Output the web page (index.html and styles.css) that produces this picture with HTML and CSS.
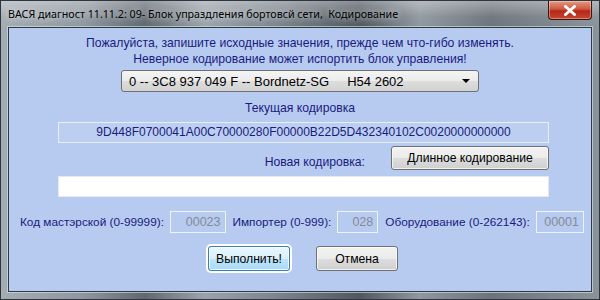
FILE: index.html
```html
<!DOCTYPE html>
<html lang="ru">
<head>
    <meta charset="UTF-8">
    <title>ВАСЯ диагност - Кодирование</title>
    <link rel="stylesheet" href="styles.css">
</head>
<body>
    <div class="window">
        <div class="titlebar">
            <span class="title">ВАСЯ диагност 11.11.2: 09- Блок упраздления бортовсй сети,&nbsp; Кодирование</span>
            <button type="button" class="close-button" aria-label="Закрыть">
                <svg width="14" height="11" viewBox="0 0 14 11">
                    <path d="M2.5 1.5 L11.5 9.5 M11.5 1.5 L2.5 9.5" stroke="#fff" stroke-width="3" stroke-linecap="round"/>
                </svg>
            </button>
        </div>

        <div class="client">
            <p class="notice">
                Пожалуйста, запишите исходные значения, прежде чем что-гибо изменять.<br>
                Неверное кодирование может испортить блок управления!
            </p>

            <div class="combo">
                <span class="combo-text">0 -- 3C8 937 049 F -- Bordnetz-SG &nbsp;&nbsp;&nbsp; H54 2602</span>
                <span class="combo-arrow"></span>
            </div>

            <div class="caption">Текущая кодировка</div>
            <div class="code-box current">9D448F0700041A00C70000280F00000B22D5D432340102C0020000000000</div>

            <div class="new-row">
                <span class="new-label">Новая кодировка:</span>
                <button type="button" class="win-button long-button">Длинное кодирование</button>
            </div>
            <div class="code-box new"></div>

            <div class="fields">
                <span class="field-label">Код мастэрской (0-99999):</span>
                <span class="field-value w-shop">00023</span>
                <span class="field-label">Импортер (0-999):</span>
                <span class="field-value w-imp">028</span>
                <span class="field-label">Оборудование (0-262143):</span>
                <span class="field-value w-equip">00001</span>
            </div>

            <div class="actions">
                <button type="button" class="win-button action default">Выполнить!</button>
                <button type="button" class="win-button action">Отмена</button>
            </div>
        </div>
    </div>
</body>
</html>
```

FILE: styles.css
```css
body {
    margin: 0;
    font-family: 'Liberation Sans', Arial, sans-serif;
    background-color: #6f7880;
}
.window {
    width: 600px;
    height: 300px;
    display: flex;
    flex-direction: column;
    box-sizing: border-box;
    border: 1px solid #2e353c;
    background: linear-gradient(90deg, #a4adb4 0%, #8e979f 14%, #5f676f 24%, #9aa3ab 34%, #7c858d 46%, #4f575f 60%, #8f989f 70%, #6b747b 82%, #8a939a 100%);
}
.titlebar {
    height: 26px;
    display: flex;
    align-items: flex-start;
    padding-left: 7px;
    background: linear-gradient(180deg, rgba(255, 255, 255, 0.35), rgba(255, 255, 255, 0.05) 60%, rgba(0, 0, 0, 0));
}
.title {
    margin-top: 6px;
    font-family: 'Noto Sans', sans-serif;
    font-size: 10.7px;
    color: #000;
    text-shadow: 0 0 6px rgba(255, 255, 255, 0.9);
    white-space: nowrap;
}
.close-button {
    margin-left: auto;
    margin-right: 7px;
    width: 44px;
    height: 19px;
    padding: 0;
    border: 1px solid #3b1510;
    border-top: none;
    border-radius: 0 0 4px 4px;
    background: linear-gradient(180deg, #e39a84 0%, #d0583f 45%, #b5281a 55%, #c8442c 100%);
    box-shadow: inset 0 0 0 1px rgba(255, 255, 255, 0.35);
    display: flex;
    align-items: center;
    justify-content: center;
}
.client {
    flex: 1;
    margin: 0 7px 7px 7px;
    border: 1px solid #2f3a44;
    box-shadow: 0 0 0 1px rgba(220, 230, 240, 0.6);
    background-color: #b7cbf0;
    display: flex;
    flex-direction: column;
    color: #1a1a80;
    font-size: 12.2px;
}
.notice {
    margin: 7px 0 0 0;
    text-align: center;
    line-height: 16px;
}
.combo {
    width: 358px;
    height: 22px;
    margin: 3px auto 0 auto;
    box-sizing: border-box;
    border: 1px solid #707070;
    border-radius: 3px;
    background: linear-gradient(180deg, #f4f4f4 0%, #ececec 50%, #dddddd 51%, #d2d2d2 100%);
    display: flex;
    align-items: center;
    padding: 0 8px 0 7px;
    color: #000;
    font-size: 13px;
}
.combo-text {
    flex: 1;
    white-space: nowrap;
}
.combo-arrow {
    width: 0;
    height: 0;
    border-left: 4px solid transparent;
    border-right: 4px solid transparent;
    border-top: 4px solid #000;
}
.caption {
    margin-top: 8px;
    text-align: center;
    line-height: 16px;
}
.code-box {
    width: 491px;
    height: 21px;
    margin-left: 49px;
    box-sizing: border-box;
    text-align: center;
    line-height: 19px;
    font-size: 12px;
    white-space: nowrap;
}
.code-box.current {
    margin-top: 6px;
    border: 1px solid #e8eef9;
    background-color: #bccff1;
    color: #1a1a80;
}
.code-box.new {
    margin-top: 6px;
    border: 1px solid #e3e8f2;
    background-color: #fff;
}
.new-row {
    width: 540px;
    margin-top: 3px;
    display: flex;
    justify-content: flex-end;
    align-items: flex-end;
}
.new-label {
    margin-right: 26px;
    line-height: 16px;
}
.win-button {
    box-sizing: border-box;
    border: 1px solid #707070;
    border-radius: 3px;
    background: linear-gradient(180deg, #f2f2f2 0%, #ebebeb 50%, #dddddd 51%, #cfcfcf 100%);
    box-shadow: inset 0 0 0 1px rgba(255, 255, 255, 0.7);
    font-family: 'Liberation Sans', Arial, sans-serif;
    font-size: 12.2px;
    color: #000;
    padding: 0;
}
.long-button {
    width: 158px;
    height: 24px;
}
.fields {
    margin-top: 14px;
    padding-left: 11px;
    display: flex;
    align-items: center;
    white-space: nowrap;
    font-size: 11.8px;
}
.field-label {
    margin-right: 6px;
}
.field-value {
    height: 22px;
    box-sizing: border-box;
    border: 1px solid #eef2fa;
    text-align: right;
    line-height: 20px;
    padding-right: 4px;
    color: #858a95;
    font-size: 12.5px;
    margin-right: 7px;
}
.w-shop {
    width: 60px;
}
.w-imp {
    width: 44px;
}
.w-equip {
    width: 52px;
}
.actions {
    margin-top: 13px;
    display: flex;
    justify-content: center;
    gap: 26px;
    padding-left: 6px;
}
.action {
    width: 82px;
    height: 25px;
}
.action.default {
    border-color: #3c7fb1;
    background: linear-gradient(180deg, #eaf6fd 0%, #d9f0fc 50%, #bee6fd 51%, #a7d9f5 100%);
    box-shadow: 0 0 0 2px #fff, inset 0 0 0 1px rgba(255, 255, 255, 0.8);
}
```
